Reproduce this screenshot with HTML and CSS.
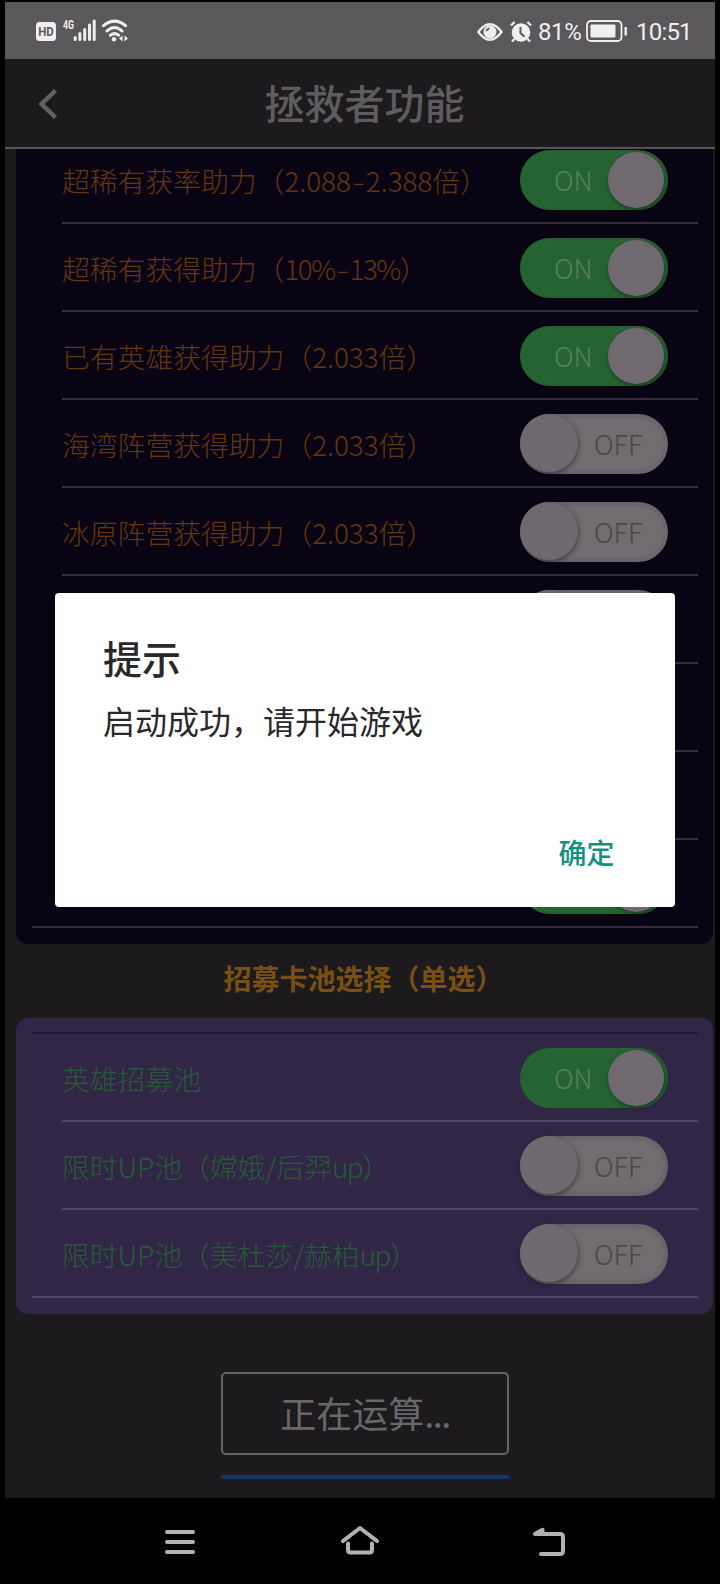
FILE: index.html
```html
<!DOCTYPE html>
<html lang="zh-CN">
<head>
<meta charset="utf-8">
<title>拯救者功能</title>
<link rel="stylesheet" href="styles.css">
</head>
<body>
<div class="phone">
  <div class="screen">
    <div class="status">
      <svg class="status-left" width="94" height="24" viewBox="0 0 94 24">
        <rect x="0" y="3" width="20" height="19" rx="3.5" fill="#f0eef1"/>
        <text x="2.3" y="17.3" class="hd" textLength="15.5" lengthAdjust="spacingAndGlyphs">HD</text>
        <text x="27" y="9.500" class="net" textLength="11" lengthAdjust="spacingAndGlyphs">4G</text>
        <path d="M39.2 18.5V20.500M43.900 14.5V20.500M48.700 10.500V20.500M53.500 6V20.500M58.200 2V20.500" stroke="#f0eef1" stroke-width="3" stroke-linecap="round"/>
        <path d="M67.500 6.700Q78.500-2.500 89.500 6.700M71 12Q78.500 5 86 12M74.500 16.200Q78.500 13 82.500 16.200" fill="none" stroke="#f0eef1" stroke-width="3" stroke-linecap="round"/>
        <circle cx="78" cy="20.300" r="2.200" fill="#f0eef1"/>
        <path d="M83 19.500l3.500-3v6zM92 19.500l-3.500-3v6z" fill="#f0eef1"/>
      </svg>
      <div class="status-right">
        <svg width="26" height="20" viewBox="0 0 26 20"><path d="M1.300 10Q13-5.500 24.500 10Q13 25.500 1.300 10z" fill="none" stroke="#f0eef1" stroke-width="2.300"/><circle cx="13" cy="10" r="6.500" fill="#f0eef1"/><path d="M12.600 5.500A4 4 0 0 1 8.500 9.500A5 5 0 0 1 12.600 5.500z" fill="#5b585b"/></svg>
        <svg class="alarm" width="22" height="22" viewBox="0 0 22 22"><circle cx="11" cy="11.500" r="9.300" fill="#f0eef1"/><path d="M1 4.500L4.500 1M21 4.500L17.500 1M4.500 18l-2.500 2.500M17.500 18l2.500 2.500" stroke="#f0eef1" stroke-width="2.400"/><path d="M10.500 6V12l4 3.800" fill="none" stroke="#5b585b" stroke-width="2"/></svg>
        <span class="pct">81%</span>
        <svg class="battery" width="42" height="22" viewBox="0 0 42 22"><rect x="1" y="1" width="34.500" height="20" rx="4" fill="none" stroke="#f0eef1" stroke-width="1.800"/><rect x="4.500" y="4.500" width="25" height="13" rx="1" fill="#f0eef1"/><path d="M39.700 7V15.500" stroke="#f0eef1" stroke-width="2.400"/></svg>
        <span class="time">10:51</span>
      </div>
    </div>
    <header class="bar">
      <svg class="back" width="20" height="32" viewBox="0 0 20 32"><path d="M17.500 2.500L3.500 16L17.500 29.500" fill="none" stroke="#615f62" stroke-width="4.500"/></svg>
      <h1>拯救者功能</h1>
    </header>
    <main class="content">
      <section class="card dark">
        <div class="row"><span>超稀有获率助力（2.088<em>-</em>2.388倍）</span><div class="switch on"><b>ON</b><i></i></div></div>
        <div class="row"><span>超稀有获得助力（<u>10%</u><em>-</em><u>13%</u>）</span><div class="switch on"><b>ON</b><i></i></div></div>
        <div class="row"><span>已有英雄获得助力（2.033倍）</span><div class="switch on"><b>ON</b><i></i></div></div>
        <div class="row"><span>海湾阵营获得助力（2.033倍）</span><div class="switch"><b>OFF</b><i></i></div></div>
        <div class="row"><span>冰原阵营获得助力（2.033倍）</span><div class="switch"><b>OFF</b><i></i></div></div>
        <div class="row"><div class="switch"><i></i></div></div>
        <div class="row"></div>
        <div class="row"></div>
        <div class="row last"><div class="switch on"><i></i></div></div>
      </section>
      <h2>招募卡池选择（单选）</h2>
      <section class="card purple">
        <div class="row"><span>英雄招募池</span><div class="switch on"><b>ON</b><i></i></div></div>
        <div class="row"><span>限时UP池（嫦娥/后羿<u>up</u>）</span><div class="switch"><b>OFF</b><i></i></div></div>
        <div class="row last"><span>限时UP池（美杜莎/赫柏<u>up</u>）</span><div class="switch"><b>OFF</b><i></i></div></div>
      </section>
      <button class="run">正在运算<span>...</span></button>
      <div class="progress"></div>
    </main>
  </div>
  <nav class="nav">
    <svg width="32" height="28" viewBox="0 0 32 28"><path d="M3 4H29M3 14H29M3 24H29" /></svg>
    <svg class="home" width="40" height="32" viewBox="0 0 40 32"><path d="M3 17L20 4L37 17M8 19.500V26Q8 28.500 10.500 28.500H29.500Q32 28.500 32 26V19.500"/></svg>
    <svg width="34" height="30" viewBox="0 0 34 30"><path d="M3 7H28Q31 7 31 10V24Q31 27 28 27H9M3 7L10.500 2.800V6"/></svg>
  </nav>
  <div class="dialog">
    <h3>提示</h3>
    <p>启动成功，请开始游戏</p>
    <a>确定</a>
  </div>
</div>
</body>
</html>
```
FILE: styles.css
```css
* { box-sizing: border-box; }
body { margin: 0; background: #000; font-family: "Noto Sans CJK SC", sans-serif; }
h1, h2, h3, p { margin: 0; }
.phone { position: relative; width: 720px; height: 1584px; overflow: hidden; background: #000; padding: 2px 5px 0; display: flex; flex-direction: column; }
.screen { height: 1496px; background: #1c1a1c; display: flex; flex-direction: column; overflow: hidden; }

.status { flex: none; height: 57px; background: #5b585b; display: flex; justify-content: space-between; align-items: center; padding: 0 24px 0 31px; color: #f0eef1; }
.hd { font: bold 13px Roboto, sans-serif; fill: #5b585b; }
.net { font: bold 12px Roboto, sans-serif; fill: #f0eef1; }
.status-right { display: flex; align-items: center; font: 24px/30px Roboto, sans-serif; padding-top: 2px; }
.alarm { margin-left: 7px; }
.pct { margin-left: 6px; width: 44px; letter-spacing: -0.4px; white-space: nowrap; }
.battery { margin: -2px 0 0 4px; }
.time { margin-left: 8px; width: 55px; letter-spacing: -0.8px; text-align: right; }

.bar { flex: none; height: 90px; border-bottom: 2px solid #565457; display: grid; grid-template-columns: 69px 1fr 60px; align-items: center; }
.back { margin: 1px 0 0 33px; }
h1 { margin-top: -3px; font-size: 40px; line-height: 60px; font-weight: 500; text-align: center; color: #5e5c5f; }

.content { flex: 1; min-height: 0; overflow: hidden; display: flex; flex-direction: column; padding-left: 11px; }
.card { flex: none; width: 697px; border-radius: 12px; }
.dark { height: 795px; background: #090414; border-radius: 0 0 12px 12px; color: #663510; --line: #343037; }
.dark .row:first-child { height: 75px; }
.dark .row:first-child > span { margin-top: -11px; }
.dark .row:first-child .switch { margin-top: -12px; }
.purple { height: 296px; background: #312646; color: #275b37; --line: #50465d; padding-top: 14px; }
.purple::before { content: ""; display: block; height: 2px; margin: 0 15px 0 16px; background: #221932; }
.row { height: 88px; margin: 0 15px 0 46px; border-bottom: 2px solid var(--line); display: flex; align-items: center; justify-content: space-between; padding-right: 30px; font-size: 27.8px; font-weight: 300; white-space: nowrap; }
.row > span { margin-top: 2px; }
.row em { display: inline-block; width: 15px; font-style: normal; text-align: center; transform: scaleX(1.4); }
.row u { text-decoration: none; letter-spacing: -1.5px; }
.row > .switch:only-child { margin-left: auto; }
.row.last { margin-left: 16px; padding-left: 30px; }

.switch { position: relative; flex: none; width: 148px; height: 60px; margin-top: 2px; border-radius: 30px; background: #716c70; border: 2px solid #68646a; box-shadow: inset 0 0 2px 2px #69656a; }
.switch b { position: absolute; left: 72px; top: 7px; font: 300 27px/41px "Noto Sans CJK SC", sans-serif; color: #494649; }
.switch i { position: absolute; left: -2px; top: -2px; width: 58px; height: 58px; border-radius: 50%; background: #6e696e; box-shadow: 1px 2px 5px rgba(0, 0, 0, .4); }
.switch.on { background: #256432; border-color: #27632f; box-shadow: inset 0 0 2px 1px #2b6535; }
.switch.on b { left: 32px; color: #59805b; }
.switch.on i { left: 86px; top: 0; width: 56px; height: 56px; background: #706a70; }

h2 { flex: none; height: 74px; line-height: 68px; width: 697px; padding-right: 2px; text-align: center; font-size: 28px; font-weight: 700; color: #795014; }
.run { flex: none; margin: 58px 0 0 205px; width: 288px; height: 83px; padding: 0 0 4px; border: 2px solid #656366; border-radius: 5px; background: none; color: #69676a; font: 400 36px/50px "Noto Sans CJK SC", sans-serif; }
.run span { letter-spacing: -1.5px; }
.progress { flex: none; width: 288px; height: 4px; margin: 20px 0 0 205px; background: #143461; }

.nav { height: 86px; display: flex; align-items: center; justify-content: space-between; padding: 2px 149px 0 159px; }
.nav path { fill: none; stroke: #b3b2b3; stroke-width: 4; stroke-linecap: round; stroke-linejoin: round; }
.nav .home { margin: -4px 8px 0 0; }

.dialog { position: absolute; left: 54.5px; top: 593px; width: 620px; height: 314px; padding: 35px 60px 35px 48.5px; background: #fff; border-radius: 4px; display: flex; flex-direction: column; color: #2a282b; }
.dialog h3 { font-size: 39px; line-height: 58px; font-weight: 500; }
.dialog p { margin-top: 10px; font-size: 32px; line-height: 48px; font-weight: 400; }
.dialog a { margin-top: auto; align-self: flex-end; color: #149083; font-size: 28px; line-height: 40px; font-weight: 500; }
```
